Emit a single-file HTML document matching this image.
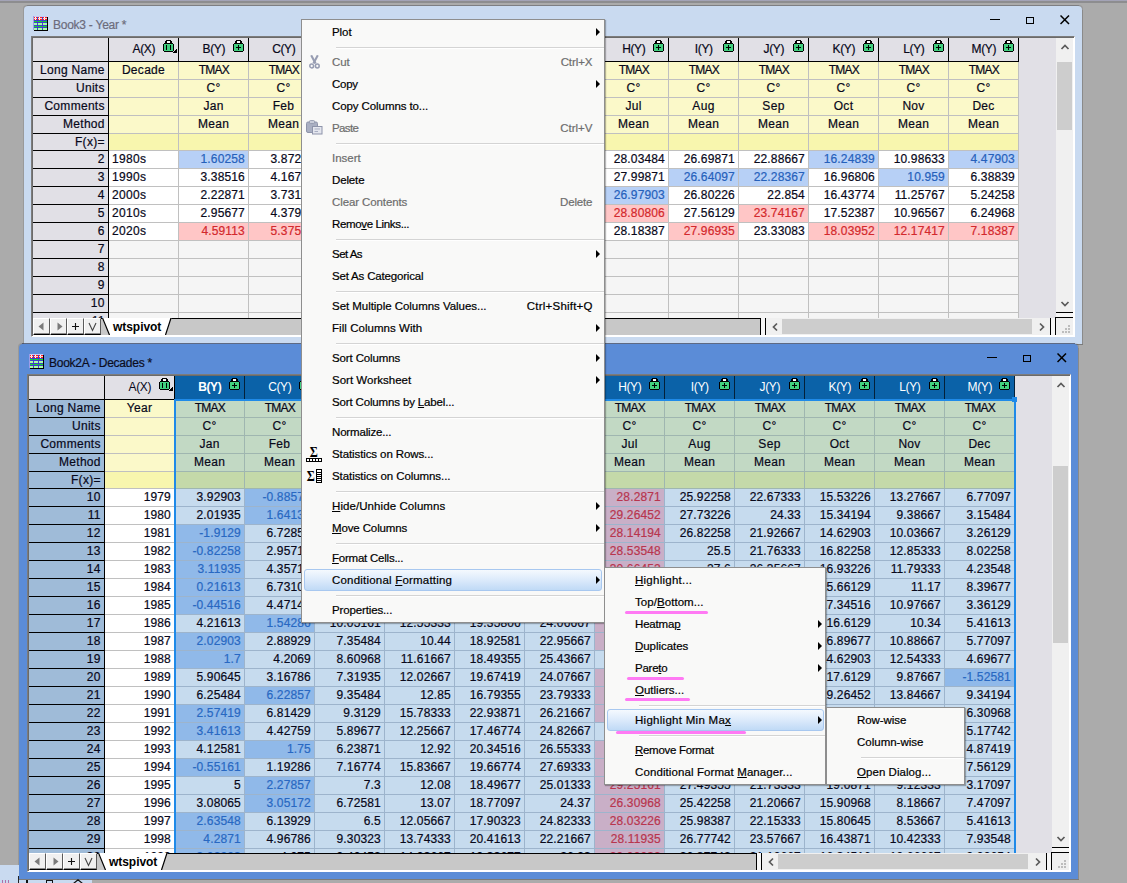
<!DOCTYPE html><html><head><meta charset="utf-8"><title>Origin</title><style>
*{box-sizing:border-box;margin:0;padding:0}
html,body{width:1127px;height:883px;overflow:hidden;background:#ababab}
body{position:relative;font-family:"Liberation Sans",sans-serif;font-size:12px;color:#000}
.a{position:absolute}
.g{position:absolute;overflow:hidden;background:#e1e0e6}
.c{position:absolute;overflow:hidden;white-space:nowrap;font-size:12px;letter-spacing:.3px;line-height:16px;height:18px;width:70px;border-right:1px solid #c0c0c0;border-bottom:1px solid #c0c0c0;color:#08081a;background:#fff;-webkit-text-stroke:.2px}
.r{text-align:right;padding-right:3.1px;letter-spacing:.14px}
.l{text-align:left;padding-left:3px}
.m{text-align:center}
.tm{letter-spacing:-.75px;padding-left:.7px}
.h{height:24px;line-height:23px;letter-spacing:-.35px;padding-left:.6px;background:#e1e0e6;border-color:#000;text-align:center}
.rh{width:76px;background:#e1e0e6;border-color:#000;text-align:right;padding-right:3.2px}
.y{background:#fbf9c9}
.y2{background:#f8f6ae}
.e{background:#f5f5f5}
.b{background:#b7d0f6;color:#2560bb}
.p{background:#ffc6c6;color:#d3282c}
.s .c{background:#c6dbee;border-color:#9db4cc}
.s .h{background:#0b62a8;color:#fff;border-color:#04213a;font-weight:normal;-webkit-text-stroke:0}
.s .bd{font-weight:bold}
.s .rh{background:#9fbbd8;border-color:#000}
.s .y{background:#c2d9c4;border-color:#9fb6b0}
.s .y2{background:#c4d9a9;border-color:#9fb6b0}
.s .b{background:#90b9e9;color:#2868c2}
.s .p{background:#c9afc7;color:#b8354e}
.s .w{background:#fff;border-color:#c0c0c0}
.s .wy{background:#fbf9c9;border-color:#c0c0c0}
.s .wy2{background:#f8f6ae;border-color:#c0c0c0}
.s .wh{background:#e1e0e6;color:#08081a;border-color:#000}
.mi{position:absolute;height:22px;line-height:21px;font-size:11.5px;white-space:nowrap;color:#000;-webkit-text-stroke:.2px}
.dis{color:#6d6d6d}
.sep{position:absolute;height:2px;border-top:1px solid #d4d4d4;border-bottom:1px solid #fff}
.arr{position:absolute;width:0;height:0;border-left:4px solid #000;border-top:4px solid transparent;border-bottom:4px solid transparent}
.menu{position:absolute;background:#f9f9f8;border:1px solid #8e8e8e;box-shadow:1px 1px 1px rgba(0,0,0,.28)}
.hl{position:absolute;border:1px solid #a8c8f0;border-radius:3px;background:linear-gradient(#f5f9fe 0%,#dceafb 50%,#c0daf6 100%)}
.pk{position:absolute;height:3.4px;border-radius:2px;background:#ff7af4}
.sb{position:absolute;background:#f0f0f0}
.th{position:absolute;background:#cdcdcd}
.tb{position:absolute;width:17px;height:17px;background:#f0f0f0;border:1px solid;border-color:#fff #5a5a5a #000 #fff;box-shadow:inset 0 -1px 0 #8a8a8a}
</style></head><body>
<div class="a" style="left:0;top:0;width:1127px;height:1px;background:#a3a3b6"></div>
<div class="a" style="left:0;top:1px;width:1127px;height:2px;background:#8d8d8f"></div>
<div class="a" style="left:24px;top:6px;width:1058px;height:338px;background:#c9daf0;border-radius:4px 4px 0 0;box-shadow:-1px -1px 0 rgba(0,0,0,.10),1px -1px 0 rgba(0,0,0,.10)"></div>
<div class="a" style="left:1082px;top:10px;width:1px;height:335px;background:#8a8a8a"></div>
<div class="a" style="left:24px;top:344px;width:1059px;height:1px;background:#7a7a7a"></div>
<div class="a" style="left:27px;top:5px;width:1052px;height:1px;background:rgba(40,50,80,.12)"></div>
<svg class="a" style="left:33px;top:16px" width="15" height="15" viewBox="0 0 15 15" shape-rendering="crispEdges"><rect x="1" y="1" width="14" height="14" fill="#000"/><rect x="0" y="0" width="14" height="14" fill="#4040cc"/><rect x="0" y="0" width="14" height="1" fill="#c8c8f4"/><rect x="0" y="0" width="1" height="14" fill="#9c9ce8"/><rect x="1" y="1" width="3" height="3" fill="#ff2020"/><rect x="2" y="1" width="1" height="3" fill="#fff"/><rect x="1" y="2" width="3" height="1" fill="#ffd0d0"/><rect x="1" y="5" width="3" height="1" fill="#10e020"/><rect x="1" y="7" width="3" height="2" fill="#a8ffa8"/><rect x="1" y="10" width="3" height="1" fill="#10e020"/><rect x="1" y="12" width="3" height="2" fill="#a8ffa8"/><rect x="5" y="1" width="4" height="3" fill="#ff2020"/><rect x="6" y="1" width="1" height="3" fill="#fff"/><rect x="5" y="2" width="4" height="1" fill="#ffd0d0"/><rect x="5" y="5" width="4" height="1" fill="#10e020"/><rect x="5" y="7" width="4" height="2" fill="#a8ffa8"/><rect x="5" y="10" width="4" height="1" fill="#10e020"/><rect x="5" y="12" width="4" height="2" fill="#a8ffa8"/><rect x="10" y="1" width="4" height="3" fill="#ff2020"/><rect x="11" y="1" width="1" height="3" fill="#fff"/><rect x="10" y="2" width="4" height="1" fill="#ffd0d0"/><rect x="10" y="5" width="4" height="1" fill="#10e020"/><rect x="10" y="7" width="4" height="2" fill="#a8ffa8"/><rect x="10" y="10" width="4" height="1" fill="#10e020"/><rect x="10" y="12" width="4" height="2" fill="#a8ffa8"/></svg>
<div class="a" style="left:53px;top:18px;font-size:12px;line-height:14px;color:#6c6c7c;white-space:nowrap;letter-spacing:-.25px;-webkit-text-stroke:.2px">Book3 - Year *</div>
<div class="a" style="left:990px;top:19px;width:10px;height:1px;background:#000"></div>
<div class="a" style="left:1026px;top:17px;width:8px;height:7px;border:1px solid #000"></div>
<svg class="a" style="left:1060px;top:15px" width="10" height="10" viewBox="0 0 10 10"><path d="M.5 .5L9 9M9 .5L.5 9" stroke="#000" stroke-width="1.5" fill="none"/></svg>
<div class="a" style="left:31px;top:36px;width:1044px;height:301px;border:2px solid;border-color:#7c7c7c #fff #fff #7c7c7c"></div>
<div class="a" style="left:32px;top:37px;width:1042px;height:299px;border-top:1px solid #6a6a6a;border-left:1px solid #6a6a6a"></div>
<div class="g" style="left:33px;top:38px;width:1023px;height:280px">
<div class="c h rh wh" style="left:0;top:0"></div>
<div class="c h" style="left:76px;top:0">A(X)</div>
<svg class="a" style="left:130px;top:2px" width="14" height="13" viewBox="0 0 14 13"><g shape-rendering="crispEdges"><rect x="3" y="0" width="5" height="1"/><rect x="2" y="1" width="7" height="3"/><rect x="4" y="1" width="3" height="2" fill="#fff"/><rect x="1" y="3" width="9" height="9"/><rect x="0" y="4" width="11" height="7"/><rect x="1" y="4" width="9" height="7" fill="#41cf7f"/><rect x="3" y="5" width="1" height="5"/><rect x="7" y="5" width="1" height="5"/><rect x="13" y="9" width="1" height="1"/><rect x="12" y="10" width="2" height="1"/><rect x="11" y="11" width="3" height="1"/><rect x="10" y="12" width="4" height="1"/></g></svg>
<div class="c h" style="left:146px;top:0">B(Y)</div>
<svg class="a" style="left:200px;top:2px" width="11" height="13" viewBox="0 0 11 13"><g shape-rendering="crispEdges"><rect x="3" y="0" width="5" height="1"/><rect x="2" y="1" width="7" height="3"/><rect x="4" y="1" width="3" height="2" fill="#fff"/><rect x="1" y="3" width="9" height="9"/><rect x="0" y="4" width="11" height="7"/><rect x="1" y="4" width="9" height="7" fill="#41cf7f"/><rect x="5" y="5" width="1" height="5"/><rect x="3" y="7" width="5" height="1"/></g></svg>
<div class="c h" style="left:216px;top:0">C(Y)</div>
<svg class="a" style="left:270px;top:2px" width="11" height="13" viewBox="0 0 11 13"><g shape-rendering="crispEdges"><rect x="3" y="0" width="5" height="1"/><rect x="2" y="1" width="7" height="3"/><rect x="4" y="1" width="3" height="2" fill="#fff"/><rect x="1" y="3" width="9" height="9"/><rect x="0" y="4" width="11" height="7"/><rect x="1" y="4" width="9" height="7" fill="#41cf7f"/><rect x="5" y="5" width="1" height="5"/><rect x="3" y="7" width="5" height="1"/></g></svg>
<div class="c h" style="left:286px;top:0">D(Y)</div>
<svg class="a" style="left:340px;top:2px" width="11" height="13" viewBox="0 0 11 13"><g shape-rendering="crispEdges"><rect x="3" y="0" width="5" height="1"/><rect x="2" y="1" width="7" height="3"/><rect x="4" y="1" width="3" height="2" fill="#fff"/><rect x="1" y="3" width="9" height="9"/><rect x="0" y="4" width="11" height="7"/><rect x="1" y="4" width="9" height="7" fill="#41cf7f"/><rect x="5" y="5" width="1" height="5"/><rect x="3" y="7" width="5" height="1"/></g></svg>
<div class="c h" style="left:356px;top:0">E(Y)</div>
<svg class="a" style="left:410px;top:2px" width="11" height="13" viewBox="0 0 11 13"><g shape-rendering="crispEdges"><rect x="3" y="0" width="5" height="1"/><rect x="2" y="1" width="7" height="3"/><rect x="4" y="1" width="3" height="2" fill="#fff"/><rect x="1" y="3" width="9" height="9"/><rect x="0" y="4" width="11" height="7"/><rect x="1" y="4" width="9" height="7" fill="#41cf7f"/><rect x="5" y="5" width="1" height="5"/><rect x="3" y="7" width="5" height="1"/></g></svg>
<div class="c h" style="left:426px;top:0">F(Y)</div>
<svg class="a" style="left:480px;top:2px" width="11" height="13" viewBox="0 0 11 13"><g shape-rendering="crispEdges"><rect x="3" y="0" width="5" height="1"/><rect x="2" y="1" width="7" height="3"/><rect x="4" y="1" width="3" height="2" fill="#fff"/><rect x="1" y="3" width="9" height="9"/><rect x="0" y="4" width="11" height="7"/><rect x="1" y="4" width="9" height="7" fill="#41cf7f"/><rect x="5" y="5" width="1" height="5"/><rect x="3" y="7" width="5" height="1"/></g></svg>
<div class="c h" style="left:496px;top:0">G(Y)</div>
<svg class="a" style="left:550px;top:2px" width="11" height="13" viewBox="0 0 11 13"><g shape-rendering="crispEdges"><rect x="3" y="0" width="5" height="1"/><rect x="2" y="1" width="7" height="3"/><rect x="4" y="1" width="3" height="2" fill="#fff"/><rect x="1" y="3" width="9" height="9"/><rect x="0" y="4" width="11" height="7"/><rect x="1" y="4" width="9" height="7" fill="#41cf7f"/><rect x="5" y="5" width="1" height="5"/><rect x="3" y="7" width="5" height="1"/></g></svg>
<div class="c h" style="left:566px;top:0">H(Y)</div>
<svg class="a" style="left:620px;top:2px" width="11" height="13" viewBox="0 0 11 13"><g shape-rendering="crispEdges"><rect x="3" y="0" width="5" height="1"/><rect x="2" y="1" width="7" height="3"/><rect x="4" y="1" width="3" height="2" fill="#fff"/><rect x="1" y="3" width="9" height="9"/><rect x="0" y="4" width="11" height="7"/><rect x="1" y="4" width="9" height="7" fill="#41cf7f"/><rect x="5" y="5" width="1" height="5"/><rect x="3" y="7" width="5" height="1"/></g></svg>
<div class="c h" style="left:636px;top:0">I(Y)</div>
<svg class="a" style="left:690px;top:2px" width="11" height="13" viewBox="0 0 11 13"><g shape-rendering="crispEdges"><rect x="3" y="0" width="5" height="1"/><rect x="2" y="1" width="7" height="3"/><rect x="4" y="1" width="3" height="2" fill="#fff"/><rect x="1" y="3" width="9" height="9"/><rect x="0" y="4" width="11" height="7"/><rect x="1" y="4" width="9" height="7" fill="#41cf7f"/><rect x="5" y="5" width="1" height="5"/><rect x="3" y="7" width="5" height="1"/></g></svg>
<div class="c h" style="left:706px;top:0">J(Y)</div>
<svg class="a" style="left:760px;top:2px" width="11" height="13" viewBox="0 0 11 13"><g shape-rendering="crispEdges"><rect x="3" y="0" width="5" height="1"/><rect x="2" y="1" width="7" height="3"/><rect x="4" y="1" width="3" height="2" fill="#fff"/><rect x="1" y="3" width="9" height="9"/><rect x="0" y="4" width="11" height="7"/><rect x="1" y="4" width="9" height="7" fill="#41cf7f"/><rect x="5" y="5" width="1" height="5"/><rect x="3" y="7" width="5" height="1"/></g></svg>
<div class="c h" style="left:776px;top:0">K(Y)</div>
<svg class="a" style="left:830px;top:2px" width="11" height="13" viewBox="0 0 11 13"><g shape-rendering="crispEdges"><rect x="3" y="0" width="5" height="1"/><rect x="2" y="1" width="7" height="3"/><rect x="4" y="1" width="3" height="2" fill="#fff"/><rect x="1" y="3" width="9" height="9"/><rect x="0" y="4" width="11" height="7"/><rect x="1" y="4" width="9" height="7" fill="#41cf7f"/><rect x="5" y="5" width="1" height="5"/><rect x="3" y="7" width="5" height="1"/></g></svg>
<div class="c h" style="left:846px;top:0">L(Y)</div>
<svg class="a" style="left:900px;top:2px" width="11" height="13" viewBox="0 0 11 13"><g shape-rendering="crispEdges"><rect x="3" y="0" width="5" height="1"/><rect x="2" y="1" width="7" height="3"/><rect x="4" y="1" width="3" height="2" fill="#fff"/><rect x="1" y="3" width="9" height="9"/><rect x="0" y="4" width="11" height="7"/><rect x="1" y="4" width="9" height="7" fill="#41cf7f"/><rect x="5" y="5" width="1" height="5"/><rect x="3" y="7" width="5" height="1"/></g></svg>
<div class="c h" style="left:916px;top:0">M(Y)</div>
<svg class="a" style="left:970px;top:2px" width="11" height="13" viewBox="0 0 11 13"><g shape-rendering="crispEdges"><rect x="3" y="0" width="5" height="1"/><rect x="2" y="1" width="7" height="3"/><rect x="4" y="1" width="3" height="2" fill="#fff"/><rect x="1" y="3" width="9" height="9"/><rect x="0" y="4" width="11" height="7"/><rect x="1" y="4" width="9" height="7" fill="#41cf7f"/><rect x="5" y="5" width="1" height="5"/><rect x="3" y="7" width="5" height="1"/></g></svg>
<div class="c rh" style="left:0;top:24px">Long Name</div>
<div class="c m y" style="left:76px;top:24px">Decade</div>
<div class="c m y tm" style="left:146px;top:24px">TMAX</div>
<div class="c m y tm" style="left:216px;top:24px">TMAX</div>
<div class="c m y tm" style="left:286px;top:24px">TMAX</div>
<div class="c m y tm" style="left:356px;top:24px">TMAX</div>
<div class="c m y tm" style="left:426px;top:24px">TMAX</div>
<div class="c m y tm" style="left:496px;top:24px">TMAX</div>
<div class="c m y tm" style="left:566px;top:24px">TMAX</div>
<div class="c m y tm" style="left:636px;top:24px">TMAX</div>
<div class="c m y tm" style="left:706px;top:24px">TMAX</div>
<div class="c m y tm" style="left:776px;top:24px">TMAX</div>
<div class="c m y tm" style="left:846px;top:24px">TMAX</div>
<div class="c m y tm" style="left:916px;top:24px">TMAX</div>
<div class="c rh" style="left:0;top:42px">Units</div>
<div class="c m y" style="left:76px;top:42px"></div>
<div class="c m y" style="left:146px;top:42px">C°</div>
<div class="c m y" style="left:216px;top:42px">C°</div>
<div class="c m y" style="left:286px;top:42px">C°</div>
<div class="c m y" style="left:356px;top:42px">C°</div>
<div class="c m y" style="left:426px;top:42px">C°</div>
<div class="c m y" style="left:496px;top:42px">C°</div>
<div class="c m y" style="left:566px;top:42px">C°</div>
<div class="c m y" style="left:636px;top:42px">C°</div>
<div class="c m y" style="left:706px;top:42px">C°</div>
<div class="c m y" style="left:776px;top:42px">C°</div>
<div class="c m y" style="left:846px;top:42px">C°</div>
<div class="c m y" style="left:916px;top:42px">C°</div>
<div class="c rh" style="left:0;top:60px">Comments</div>
<div class="c m y" style="left:76px;top:60px"></div>
<div class="c m y" style="left:146px;top:60px">Jan</div>
<div class="c m y" style="left:216px;top:60px">Feb</div>
<div class="c m y" style="left:286px;top:60px">Mar</div>
<div class="c m y" style="left:356px;top:60px">Apr</div>
<div class="c m y" style="left:426px;top:60px">May</div>
<div class="c m y" style="left:496px;top:60px">Jun</div>
<div class="c m y" style="left:566px;top:60px">Jul</div>
<div class="c m y" style="left:636px;top:60px">Aug</div>
<div class="c m y" style="left:706px;top:60px">Sep</div>
<div class="c m y" style="left:776px;top:60px">Oct</div>
<div class="c m y" style="left:846px;top:60px">Nov</div>
<div class="c m y" style="left:916px;top:60px">Dec</div>
<div class="c rh" style="left:0;top:78px">Method</div>
<div class="c m y" style="left:76px;top:78px"></div>
<div class="c m y" style="left:146px;top:78px">Mean</div>
<div class="c m y" style="left:216px;top:78px">Mean</div>
<div class="c m y" style="left:286px;top:78px">Mean</div>
<div class="c m y" style="left:356px;top:78px">Mean</div>
<div class="c m y" style="left:426px;top:78px">Mean</div>
<div class="c m y" style="left:496px;top:78px">Mean</div>
<div class="c m y" style="left:566px;top:78px">Mean</div>
<div class="c m y" style="left:636px;top:78px">Mean</div>
<div class="c m y" style="left:706px;top:78px">Mean</div>
<div class="c m y" style="left:776px;top:78px">Mean</div>
<div class="c m y" style="left:846px;top:78px">Mean</div>
<div class="c m y" style="left:916px;top:78px">Mean</div>
<div class="c rh" style="left:0;top:96px;height:17px">F(x)=</div>
<div class="c m y2" style="left:76px;top:96px;height:17px"></div>
<div class="c m y2" style="left:146px;top:96px;height:17px"></div>
<div class="c m y2" style="left:216px;top:96px;height:17px"></div>
<div class="c m y2" style="left:286px;top:96px;height:17px"></div>
<div class="c m y2" style="left:356px;top:96px;height:17px"></div>
<div class="c m y2" style="left:426px;top:96px;height:17px"></div>
<div class="c m y2" style="left:496px;top:96px;height:17px"></div>
<div class="c m y2" style="left:566px;top:96px;height:17px"></div>
<div class="c m y2" style="left:636px;top:96px;height:17px"></div>
<div class="c m y2" style="left:706px;top:96px;height:17px"></div>
<div class="c m y2" style="left:776px;top:96px;height:17px"></div>
<div class="c m y2" style="left:846px;top:96px;height:17px"></div>
<div class="c m y2" style="left:916px;top:96px;height:17px"></div>
<div class="c rh" style="left:0;top:113px">2</div>
<div class="c l" style="left:76px;top:113px">1980s</div>
<div class="c r b" style="left:146px;top:113px">1.60258</div>
<div class="c r" style="left:216px;top:113px">3.87241</div>
<div class="c r" style="left:286px;top:113px">9.14516</div>
<div class="c r" style="left:356px;top:113px">14.2</div>
<div class="c r" style="left:426px;top:113px">19.8</div>
<div class="c r" style="left:496px;top:113px">24.9</div>
<div class="c r" style="left:566px;top:113px">28.03484</div>
<div class="c r" style="left:636px;top:113px">26.69871</div>
<div class="c r" style="left:706px;top:113px">22.88667</div>
<div class="c r b" style="left:776px;top:113px">16.24839</div>
<div class="c r" style="left:846px;top:113px">10.98633</div>
<div class="c r b" style="left:916px;top:113px">4.47903</div>
<div class="c rh" style="left:0;top:131px">3</div>
<div class="c l" style="left:76px;top:131px">1990s</div>
<div class="c r" style="left:146px;top:131px">3.38516</div>
<div class="c r" style="left:216px;top:131px">4.16786</div>
<div class="c r" style="left:286px;top:131px">9.1</div>
<div class="c r" style="left:356px;top:131px">14.2</div>
<div class="c r" style="left:426px;top:131px">19.8</div>
<div class="c r" style="left:496px;top:131px">24.9</div>
<div class="c r" style="left:566px;top:131px">27.99871</div>
<div class="c r b" style="left:636px;top:131px">26.64097</div>
<div class="c r b" style="left:706px;top:131px">22.28367</div>
<div class="c r" style="left:776px;top:131px">16.96806</div>
<div class="c r b" style="left:846px;top:131px">10.959</div>
<div class="c r" style="left:916px;top:131px">6.38839</div>
<div class="c rh" style="left:0;top:149px">4</div>
<div class="c l" style="left:76px;top:149px">2000s</div>
<div class="c r" style="left:146px;top:149px">2.22871</div>
<div class="c r" style="left:216px;top:149px">3.73103</div>
<div class="c r" style="left:286px;top:149px">9.1</div>
<div class="c r" style="left:356px;top:149px">14.2</div>
<div class="c r" style="left:426px;top:149px">19.8</div>
<div class="c r" style="left:496px;top:149px">24.9</div>
<div class="c r b" style="left:566px;top:149px">26.97903</div>
<div class="c r" style="left:636px;top:149px">26.80226</div>
<div class="c r" style="left:706px;top:149px">22.854</div>
<div class="c r" style="left:776px;top:149px">16.43774</div>
<div class="c r" style="left:846px;top:149px">11.25767</div>
<div class="c r" style="left:916px;top:149px">5.24258</div>
<div class="c rh" style="left:0;top:167px">5</div>
<div class="c l" style="left:76px;top:167px">2010s</div>
<div class="c r" style="left:146px;top:167px">2.95677</div>
<div class="c r" style="left:216px;top:167px">4.37931</div>
<div class="c r" style="left:286px;top:167px">9.1</div>
<div class="c r" style="left:356px;top:167px">14.2</div>
<div class="c r" style="left:426px;top:167px">19.8</div>
<div class="c r" style="left:496px;top:167px">24.9</div>
<div class="c r p" style="left:566px;top:167px">28.80806</div>
<div class="c r" style="left:636px;top:167px">27.56129</div>
<div class="c r p" style="left:706px;top:167px">23.74167</div>
<div class="c r" style="left:776px;top:167px">17.52387</div>
<div class="c r" style="left:846px;top:167px">10.96567</div>
<div class="c r" style="left:916px;top:167px">6.24968</div>
<div class="c rh" style="left:0;top:185px">6</div>
<div class="c l" style="left:76px;top:185px">2020s</div>
<div class="c r p" style="left:146px;top:185px">4.59113</div>
<div class="c r p" style="left:216px;top:185px">5.37586</div>
<div class="c r" style="left:286px;top:185px">9.1</div>
<div class="c r" style="left:356px;top:185px">14.2</div>
<div class="c r" style="left:426px;top:185px">19.8</div>
<div class="c r" style="left:496px;top:185px">24.9</div>
<div class="c r" style="left:566px;top:185px">28.18387</div>
<div class="c r p" style="left:636px;top:185px">27.96935</div>
<div class="c r" style="left:706px;top:185px">23.33083</div>
<div class="c r p" style="left:776px;top:185px">18.03952</div>
<div class="c r p" style="left:846px;top:185px">12.17417</div>
<div class="c r p" style="left:916px;top:185px">7.18387</div>
<div class="c rh" style="left:0;top:203px">7</div>
<div class="c e" style="left:76px;top:203px"></div>
<div class="c e" style="left:146px;top:203px"></div>
<div class="c e" style="left:216px;top:203px"></div>
<div class="c e" style="left:286px;top:203px"></div>
<div class="c e" style="left:356px;top:203px"></div>
<div class="c e" style="left:426px;top:203px"></div>
<div class="c e" style="left:496px;top:203px"></div>
<div class="c e" style="left:566px;top:203px"></div>
<div class="c e" style="left:636px;top:203px"></div>
<div class="c e" style="left:706px;top:203px"></div>
<div class="c e" style="left:776px;top:203px"></div>
<div class="c e" style="left:846px;top:203px"></div>
<div class="c e" style="left:916px;top:203px"></div>
<div class="c rh" style="left:0;top:221px">8</div>
<div class="c e" style="left:76px;top:221px"></div>
<div class="c e" style="left:146px;top:221px"></div>
<div class="c e" style="left:216px;top:221px"></div>
<div class="c e" style="left:286px;top:221px"></div>
<div class="c e" style="left:356px;top:221px"></div>
<div class="c e" style="left:426px;top:221px"></div>
<div class="c e" style="left:496px;top:221px"></div>
<div class="c e" style="left:566px;top:221px"></div>
<div class="c e" style="left:636px;top:221px"></div>
<div class="c e" style="left:706px;top:221px"></div>
<div class="c e" style="left:776px;top:221px"></div>
<div class="c e" style="left:846px;top:221px"></div>
<div class="c e" style="left:916px;top:221px"></div>
<div class="c rh" style="left:0;top:239px">9</div>
<div class="c e" style="left:76px;top:239px"></div>
<div class="c e" style="left:146px;top:239px"></div>
<div class="c e" style="left:216px;top:239px"></div>
<div class="c e" style="left:286px;top:239px"></div>
<div class="c e" style="left:356px;top:239px"></div>
<div class="c e" style="left:426px;top:239px"></div>
<div class="c e" style="left:496px;top:239px"></div>
<div class="c e" style="left:566px;top:239px"></div>
<div class="c e" style="left:636px;top:239px"></div>
<div class="c e" style="left:706px;top:239px"></div>
<div class="c e" style="left:776px;top:239px"></div>
<div class="c e" style="left:846px;top:239px"></div>
<div class="c e" style="left:916px;top:239px"></div>
<div class="c rh" style="left:0;top:257px">10</div>
<div class="c e" style="left:76px;top:257px"></div>
<div class="c e" style="left:146px;top:257px"></div>
<div class="c e" style="left:216px;top:257px"></div>
<div class="c e" style="left:286px;top:257px"></div>
<div class="c e" style="left:356px;top:257px"></div>
<div class="c e" style="left:426px;top:257px"></div>
<div class="c e" style="left:496px;top:257px"></div>
<div class="c e" style="left:566px;top:257px"></div>
<div class="c e" style="left:636px;top:257px"></div>
<div class="c e" style="left:706px;top:257px"></div>
<div class="c e" style="left:776px;top:257px"></div>
<div class="c e" style="left:846px;top:257px"></div>
<div class="c e" style="left:916px;top:257px"></div>
<div class="c rh" style="left:0;top:275px">11</div>
<div class="c e" style="left:76px;top:275px"></div>
<div class="c e" style="left:146px;top:275px"></div>
<div class="c e" style="left:216px;top:275px"></div>
<div class="c e" style="left:286px;top:275px"></div>
<div class="c e" style="left:356px;top:275px"></div>
<div class="c e" style="left:426px;top:275px"></div>
<div class="c e" style="left:496px;top:275px"></div>
<div class="c e" style="left:566px;top:275px"></div>
<div class="c e" style="left:636px;top:275px"></div>
<div class="c e" style="left:706px;top:275px"></div>
<div class="c e" style="left:776px;top:275px"></div>
<div class="c e" style="left:846px;top:275px"></div>
<div class="c e" style="left:916px;top:275px"></div>
</div>
<div class="a" style="left:19px;top:344px;width:1059px;height:535px;background:#5b8cd7;border-radius:4px 4px 0 0;box-shadow:-1px -1px 0 rgba(0,0,0,.10),1px -1px 0 rgba(0,0,0,.10)"></div>
<div class="a" style="left:1078px;top:348px;width:1px;height:532px;background:#8a8a8a"></div>
<div class="a" style="left:19px;top:879px;width:1060px;height:1px;background:#7a7a7a"></div>
<div class="a" style="left:22px;top:343px;width:1053px;height:1px;background:rgba(40,50,80,.55)"></div>
<svg class="a" style="left:29px;top:354px" width="15" height="15" viewBox="0 0 15 15" shape-rendering="crispEdges"><rect x="1" y="1" width="14" height="14" fill="#000"/><rect x="0" y="0" width="14" height="14" fill="#4040cc"/><rect x="0" y="0" width="14" height="1" fill="#c8c8f4"/><rect x="0" y="0" width="1" height="14" fill="#9c9ce8"/><rect x="1" y="1" width="3" height="3" fill="#ff2020"/><rect x="2" y="1" width="1" height="3" fill="#fff"/><rect x="1" y="2" width="3" height="1" fill="#ffd0d0"/><rect x="1" y="5" width="3" height="1" fill="#10e020"/><rect x="1" y="7" width="3" height="2" fill="#a8ffa8"/><rect x="1" y="10" width="3" height="1" fill="#10e020"/><rect x="1" y="12" width="3" height="2" fill="#a8ffa8"/><rect x="5" y="1" width="4" height="3" fill="#ff2020"/><rect x="6" y="1" width="1" height="3" fill="#fff"/><rect x="5" y="2" width="4" height="1" fill="#ffd0d0"/><rect x="5" y="5" width="4" height="1" fill="#10e020"/><rect x="5" y="7" width="4" height="2" fill="#a8ffa8"/><rect x="5" y="10" width="4" height="1" fill="#10e020"/><rect x="5" y="12" width="4" height="2" fill="#a8ffa8"/><rect x="10" y="1" width="4" height="3" fill="#ff2020"/><rect x="11" y="1" width="1" height="3" fill="#fff"/><rect x="10" y="2" width="4" height="1" fill="#ffd0d0"/><rect x="10" y="5" width="4" height="1" fill="#10e020"/><rect x="10" y="7" width="4" height="2" fill="#a8ffa8"/><rect x="10" y="10" width="4" height="1" fill="#10e020"/><rect x="10" y="12" width="4" height="2" fill="#a8ffa8"/></svg>
<div class="a" style="left:49px;top:356px;font-size:12px;line-height:14px;color:#0c0c20;white-space:nowrap;letter-spacing:-.25px;-webkit-text-stroke:.2px">Book2A - Decades *</div>
<div class="a" style="left:987px;top:357px;width:10px;height:1px;background:#000"></div>
<div class="a" style="left:1023px;top:355px;width:8px;height:7px;border:1px solid #000"></div>
<svg class="a" style="left:1057px;top:353px" width="10" height="10" viewBox="0 0 10 10"><path d="M.5 .5L9 9M9 .5L.5 9" stroke="#000" stroke-width="1.5" fill="none"/></svg>
<div class="a" style="left:27px;top:374px;width:1044px;height:498px;border:2px solid;border-color:#7c7c7c #fff #fff #7c7c7c"></div>
<div class="a" style="left:28px;top:375px;width:1042px;height:496px;border-top:1px solid #6a6a6a;border-left:1px solid #6a6a6a"></div>
<div class="g s" style="left:29px;top:376px;width:1023px;height:477px">
<div class="c h rh wh" style="left:0;top:0"></div>
<div class="c h wh" style="left:76px;top:0">A(X)</div>
<svg class="a" style="left:130px;top:2px" width="14" height="13" viewBox="0 0 14 13"><g shape-rendering="crispEdges"><rect x="3" y="0" width="5" height="1"/><rect x="2" y="1" width="7" height="3"/><rect x="4" y="1" width="3" height="2" fill="#fff"/><rect x="1" y="3" width="9" height="9"/><rect x="0" y="4" width="11" height="7"/><rect x="1" y="4" width="9" height="7" fill="#41cf7f"/><rect x="3" y="5" width="1" height="5"/><rect x="7" y="5" width="1" height="5"/><rect x="13" y="9" width="1" height="1"/><rect x="12" y="10" width="2" height="1"/><rect x="11" y="11" width="3" height="1"/><rect x="10" y="12" width="4" height="1"/></g></svg>
<div class="c h bd" style="left:146px;top:0">B(Y)</div>
<svg class="a" style="left:200px;top:2px" width="11" height="13" viewBox="0 0 11 13"><g shape-rendering="crispEdges"><rect x="3" y="0" width="5" height="1"/><rect x="2" y="1" width="7" height="3"/><rect x="4" y="1" width="3" height="2" fill="#fff"/><rect x="1" y="3" width="9" height="9"/><rect x="0" y="4" width="11" height="7"/><rect x="1" y="4" width="9" height="7" fill="#41cf7f"/><rect x="5" y="5" width="1" height="5"/><rect x="3" y="7" width="5" height="1"/></g></svg>
<div class="c h" style="left:216px;top:0">C(Y)</div>
<svg class="a" style="left:270px;top:2px" width="11" height="13" viewBox="0 0 11 13"><g shape-rendering="crispEdges"><rect x="3" y="0" width="5" height="1"/><rect x="2" y="1" width="7" height="3"/><rect x="4" y="1" width="3" height="2" fill="#fff"/><rect x="1" y="3" width="9" height="9"/><rect x="0" y="4" width="11" height="7"/><rect x="1" y="4" width="9" height="7" fill="#41cf7f"/><rect x="5" y="5" width="1" height="5"/><rect x="3" y="7" width="5" height="1"/></g></svg>
<div class="c h" style="left:286px;top:0">D(Y)</div>
<svg class="a" style="left:340px;top:2px" width="11" height="13" viewBox="0 0 11 13"><g shape-rendering="crispEdges"><rect x="3" y="0" width="5" height="1"/><rect x="2" y="1" width="7" height="3"/><rect x="4" y="1" width="3" height="2" fill="#fff"/><rect x="1" y="3" width="9" height="9"/><rect x="0" y="4" width="11" height="7"/><rect x="1" y="4" width="9" height="7" fill="#41cf7f"/><rect x="5" y="5" width="1" height="5"/><rect x="3" y="7" width="5" height="1"/></g></svg>
<div class="c h" style="left:356px;top:0">E(Y)</div>
<svg class="a" style="left:410px;top:2px" width="11" height="13" viewBox="0 0 11 13"><g shape-rendering="crispEdges"><rect x="3" y="0" width="5" height="1"/><rect x="2" y="1" width="7" height="3"/><rect x="4" y="1" width="3" height="2" fill="#fff"/><rect x="1" y="3" width="9" height="9"/><rect x="0" y="4" width="11" height="7"/><rect x="1" y="4" width="9" height="7" fill="#41cf7f"/><rect x="5" y="5" width="1" height="5"/><rect x="3" y="7" width="5" height="1"/></g></svg>
<div class="c h" style="left:426px;top:0">F(Y)</div>
<svg class="a" style="left:480px;top:2px" width="11" height="13" viewBox="0 0 11 13"><g shape-rendering="crispEdges"><rect x="3" y="0" width="5" height="1"/><rect x="2" y="1" width="7" height="3"/><rect x="4" y="1" width="3" height="2" fill="#fff"/><rect x="1" y="3" width="9" height="9"/><rect x="0" y="4" width="11" height="7"/><rect x="1" y="4" width="9" height="7" fill="#41cf7f"/><rect x="5" y="5" width="1" height="5"/><rect x="3" y="7" width="5" height="1"/></g></svg>
<div class="c h" style="left:496px;top:0">G(Y)</div>
<svg class="a" style="left:550px;top:2px" width="11" height="13" viewBox="0 0 11 13"><g shape-rendering="crispEdges"><rect x="3" y="0" width="5" height="1"/><rect x="2" y="1" width="7" height="3"/><rect x="4" y="1" width="3" height="2" fill="#fff"/><rect x="1" y="3" width="9" height="9"/><rect x="0" y="4" width="11" height="7"/><rect x="1" y="4" width="9" height="7" fill="#41cf7f"/><rect x="5" y="5" width="1" height="5"/><rect x="3" y="7" width="5" height="1"/></g></svg>
<div class="c h" style="left:566px;top:0">H(Y)</div>
<svg class="a" style="left:620px;top:2px" width="11" height="13" viewBox="0 0 11 13"><g shape-rendering="crispEdges"><rect x="3" y="0" width="5" height="1"/><rect x="2" y="1" width="7" height="3"/><rect x="4" y="1" width="3" height="2" fill="#fff"/><rect x="1" y="3" width="9" height="9"/><rect x="0" y="4" width="11" height="7"/><rect x="1" y="4" width="9" height="7" fill="#41cf7f"/><rect x="5" y="5" width="1" height="5"/><rect x="3" y="7" width="5" height="1"/></g></svg>
<div class="c h" style="left:636px;top:0">I(Y)</div>
<svg class="a" style="left:690px;top:2px" width="11" height="13" viewBox="0 0 11 13"><g shape-rendering="crispEdges"><rect x="3" y="0" width="5" height="1"/><rect x="2" y="1" width="7" height="3"/><rect x="4" y="1" width="3" height="2" fill="#fff"/><rect x="1" y="3" width="9" height="9"/><rect x="0" y="4" width="11" height="7"/><rect x="1" y="4" width="9" height="7" fill="#41cf7f"/><rect x="5" y="5" width="1" height="5"/><rect x="3" y="7" width="5" height="1"/></g></svg>
<div class="c h" style="left:706px;top:0">J(Y)</div>
<svg class="a" style="left:760px;top:2px" width="11" height="13" viewBox="0 0 11 13"><g shape-rendering="crispEdges"><rect x="3" y="0" width="5" height="1"/><rect x="2" y="1" width="7" height="3"/><rect x="4" y="1" width="3" height="2" fill="#fff"/><rect x="1" y="3" width="9" height="9"/><rect x="0" y="4" width="11" height="7"/><rect x="1" y="4" width="9" height="7" fill="#41cf7f"/><rect x="5" y="5" width="1" height="5"/><rect x="3" y="7" width="5" height="1"/></g></svg>
<div class="c h" style="left:776px;top:0">K(Y)</div>
<svg class="a" style="left:830px;top:2px" width="11" height="13" viewBox="0 0 11 13"><g shape-rendering="crispEdges"><rect x="3" y="0" width="5" height="1"/><rect x="2" y="1" width="7" height="3"/><rect x="4" y="1" width="3" height="2" fill="#fff"/><rect x="1" y="3" width="9" height="9"/><rect x="0" y="4" width="11" height="7"/><rect x="1" y="4" width="9" height="7" fill="#41cf7f"/><rect x="5" y="5" width="1" height="5"/><rect x="3" y="7" width="5" height="1"/></g></svg>
<div class="c h" style="left:846px;top:0">L(Y)</div>
<svg class="a" style="left:900px;top:2px" width="11" height="13" viewBox="0 0 11 13"><g shape-rendering="crispEdges"><rect x="3" y="0" width="5" height="1"/><rect x="2" y="1" width="7" height="3"/><rect x="4" y="1" width="3" height="2" fill="#fff"/><rect x="1" y="3" width="9" height="9"/><rect x="0" y="4" width="11" height="7"/><rect x="1" y="4" width="9" height="7" fill="#41cf7f"/><rect x="5" y="5" width="1" height="5"/><rect x="3" y="7" width="5" height="1"/></g></svg>
<div class="c h" style="left:916px;top:0">M(Y)</div>
<svg class="a" style="left:970px;top:2px" width="11" height="13" viewBox="0 0 11 13"><g shape-rendering="crispEdges"><rect x="3" y="0" width="5" height="1"/><rect x="2" y="1" width="7" height="3"/><rect x="4" y="1" width="3" height="2" fill="#fff"/><rect x="1" y="3" width="9" height="9"/><rect x="0" y="4" width="11" height="7"/><rect x="1" y="4" width="9" height="7" fill="#41cf7f"/><rect x="5" y="5" width="1" height="5"/><rect x="3" y="7" width="5" height="1"/></g></svg>
<div class="c rh" style="left:0;top:24px">Long Name</div>
<div class="c m wy" style="left:76px;top:24px">Year</div>
<div class="c m y tm" style="left:146px;top:24px">TMAX</div>
<div class="c m y tm" style="left:216px;top:24px">TMAX</div>
<div class="c m y tm" style="left:286px;top:24px">TMAX</div>
<div class="c m y tm" style="left:356px;top:24px">TMAX</div>
<div class="c m y tm" style="left:426px;top:24px">TMAX</div>
<div class="c m y tm" style="left:496px;top:24px">TMAX</div>
<div class="c m y tm" style="left:566px;top:24px">TMAX</div>
<div class="c m y tm" style="left:636px;top:24px">TMAX</div>
<div class="c m y tm" style="left:706px;top:24px">TMAX</div>
<div class="c m y tm" style="left:776px;top:24px">TMAX</div>
<div class="c m y tm" style="left:846px;top:24px">TMAX</div>
<div class="c m y tm" style="left:916px;top:24px">TMAX</div>
<div class="c rh" style="left:0;top:42px">Units</div>
<div class="c m wy" style="left:76px;top:42px"></div>
<div class="c m y" style="left:146px;top:42px">C°</div>
<div class="c m y" style="left:216px;top:42px">C°</div>
<div class="c m y" style="left:286px;top:42px">C°</div>
<div class="c m y" style="left:356px;top:42px">C°</div>
<div class="c m y" style="left:426px;top:42px">C°</div>
<div class="c m y" style="left:496px;top:42px">C°</div>
<div class="c m y" style="left:566px;top:42px">C°</div>
<div class="c m y" style="left:636px;top:42px">C°</div>
<div class="c m y" style="left:706px;top:42px">C°</div>
<div class="c m y" style="left:776px;top:42px">C°</div>
<div class="c m y" style="left:846px;top:42px">C°</div>
<div class="c m y" style="left:916px;top:42px">C°</div>
<div class="c rh" style="left:0;top:60px">Comments</div>
<div class="c m wy" style="left:76px;top:60px"></div>
<div class="c m y" style="left:146px;top:60px">Jan</div>
<div class="c m y" style="left:216px;top:60px">Feb</div>
<div class="c m y" style="left:286px;top:60px">Mar</div>
<div class="c m y" style="left:356px;top:60px">Apr</div>
<div class="c m y" style="left:426px;top:60px">May</div>
<div class="c m y" style="left:496px;top:60px">Jun</div>
<div class="c m y" style="left:566px;top:60px">Jul</div>
<div class="c m y" style="left:636px;top:60px">Aug</div>
<div class="c m y" style="left:706px;top:60px">Sep</div>
<div class="c m y" style="left:776px;top:60px">Oct</div>
<div class="c m y" style="left:846px;top:60px">Nov</div>
<div class="c m y" style="left:916px;top:60px">Dec</div>
<div class="c rh" style="left:0;top:78px">Method</div>
<div class="c m wy" style="left:76px;top:78px"></div>
<div class="c m y" style="left:146px;top:78px">Mean</div>
<div class="c m y" style="left:216px;top:78px">Mean</div>
<div class="c m y" style="left:286px;top:78px">Mean</div>
<div class="c m y" style="left:356px;top:78px">Mean</div>
<div class="c m y" style="left:426px;top:78px">Mean</div>
<div class="c m y" style="left:496px;top:78px">Mean</div>
<div class="c m y" style="left:566px;top:78px">Mean</div>
<div class="c m y" style="left:636px;top:78px">Mean</div>
<div class="c m y" style="left:706px;top:78px">Mean</div>
<div class="c m y" style="left:776px;top:78px">Mean</div>
<div class="c m y" style="left:846px;top:78px">Mean</div>
<div class="c m y" style="left:916px;top:78px">Mean</div>
<div class="c rh" style="left:0;top:96px;height:17px">F(x)=</div>
<div class="c m wy2" style="left:76px;top:96px;height:17px"></div>
<div class="c m y2" style="left:146px;top:96px;height:17px"></div>
<div class="c m y2" style="left:216px;top:96px;height:17px"></div>
<div class="c m y2" style="left:286px;top:96px;height:17px"></div>
<div class="c m y2" style="left:356px;top:96px;height:17px"></div>
<div class="c m y2" style="left:426px;top:96px;height:17px"></div>
<div class="c m y2" style="left:496px;top:96px;height:17px"></div>
<div class="c m y2" style="left:566px;top:96px;height:17px"></div>
<div class="c m y2" style="left:636px;top:96px;height:17px"></div>
<div class="c m y2" style="left:706px;top:96px;height:17px"></div>
<div class="c m y2" style="left:776px;top:96px;height:17px"></div>
<div class="c m y2" style="left:846px;top:96px;height:17px"></div>
<div class="c m y2" style="left:916px;top:96px;height:17px"></div>
<div class="c rh" style="left:0;top:113px">10</div>
<div class="c r w" style="left:76px;top:113px">1979</div>
<div class="c r" style="left:146px;top:113px">3.92903</div>
<div class="c r b" style="left:216px;top:113px">-0.88571</div>
<div class="c r" style="left:286px;top:113px">7.1</div>
<div class="c r" style="left:356px;top:113px">12.1</div>
<div class="c r" style="left:426px;top:113px">19.1</div>
<div class="c r" style="left:496px;top:113px">24.1</div>
<div class="c r p" style="left:566px;top:113px">28.2871</div>
<div class="c r" style="left:636px;top:113px">25.92258</div>
<div class="c r" style="left:706px;top:113px">22.67333</div>
<div class="c r" style="left:776px;top:113px">15.53226</div>
<div class="c r" style="left:846px;top:113px">13.27667</div>
<div class="c r" style="left:916px;top:113px">6.77097</div>
<div class="c rh" style="left:0;top:131px">11</div>
<div class="c r w" style="left:76px;top:131px">1980</div>
<div class="c r" style="left:146px;top:131px">2.01935</div>
<div class="c r b" style="left:216px;top:131px">1.64138</div>
<div class="c r" style="left:286px;top:131px">8.2</div>
<div class="c r" style="left:356px;top:131px">13.2</div>
<div class="c r" style="left:426px;top:131px">18.2</div>
<div class="c r" style="left:496px;top:131px">25.2</div>
<div class="c r p" style="left:566px;top:131px">29.26452</div>
<div class="c r" style="left:636px;top:131px">27.73226</div>
<div class="c r" style="left:706px;top:131px">24.33</div>
<div class="c r" style="left:776px;top:131px">15.34194</div>
<div class="c r" style="left:846px;top:131px">9.38667</div>
<div class="c r" style="left:916px;top:131px">3.15484</div>
<div class="c rh" style="left:0;top:149px">12</div>
<div class="c r w" style="left:76px;top:149px">1981</div>
<div class="c r b" style="left:146px;top:149px">-1.9129</div>
<div class="c r" style="left:216px;top:149px">6.72857</div>
<div class="c r" style="left:286px;top:149px">9.3</div>
<div class="c r" style="left:356px;top:149px">11.3</div>
<div class="c r" style="left:426px;top:149px">19.3</div>
<div class="c r" style="left:496px;top:149px">24.3</div>
<div class="c r p" style="left:566px;top:149px">28.14194</div>
<div class="c r" style="left:636px;top:149px">26.82258</div>
<div class="c r" style="left:706px;top:149px">21.92667</div>
<div class="c r" style="left:776px;top:149px">14.62903</div>
<div class="c r" style="left:846px;top:149px">10.03667</div>
<div class="c r" style="left:916px;top:149px">3.26129</div>
<div class="c rh" style="left:0;top:167px">13</div>
<div class="c r w" style="left:76px;top:167px">1982</div>
<div class="c r b" style="left:146px;top:167px">-0.82258</div>
<div class="c r" style="left:216px;top:167px">2.95714</div>
<div class="c r" style="left:286px;top:167px">6.4</div>
<div class="c r" style="left:356px;top:167px">12.4</div>
<div class="c r" style="left:426px;top:167px">18.4</div>
<div class="c r" style="left:496px;top:167px">25.4</div>
<div class="c r p" style="left:566px;top:167px">28.53548</div>
<div class="c r" style="left:636px;top:167px">25.5</div>
<div class="c r" style="left:706px;top:167px">21.76333</div>
<div class="c r" style="left:776px;top:167px">16.82258</div>
<div class="c r" style="left:846px;top:167px">12.85333</div>
<div class="c r" style="left:916px;top:167px">8.02258</div>
<div class="c rh" style="left:0;top:185px">14</div>
<div class="c r w" style="left:76px;top:185px">1983</div>
<div class="c r b" style="left:146px;top:185px">3.11935</div>
<div class="c r" style="left:216px;top:185px">4.35714</div>
<div class="c r" style="left:286px;top:185px">7.5</div>
<div class="c r" style="left:356px;top:185px">13.5</div>
<div class="c r" style="left:426px;top:185px">19.5</div>
<div class="c r" style="left:496px;top:185px">24.5</div>
<div class="c r p" style="left:566px;top:185px">30.66452</div>
<div class="c r" style="left:636px;top:185px">27.6</div>
<div class="c r" style="left:706px;top:185px">26.35667</div>
<div class="c r" style="left:776px;top:185px">16.93226</div>
<div class="c r" style="left:846px;top:185px">11.79333</div>
<div class="c r" style="left:916px;top:185px">4.23548</div>
<div class="c rh" style="left:0;top:203px">15</div>
<div class="c r w" style="left:76px;top:203px">1984</div>
<div class="c r b" style="left:146px;top:203px">0.21613</div>
<div class="c r" style="left:216px;top:203px">6.73103</div>
<div class="c r" style="left:286px;top:203px">8.6</div>
<div class="c r" style="left:356px;top:203px">12.6</div>
<div class="c r" style="left:426px;top:203px">18.6</div>
<div class="c r" style="left:496px;top:203px">25.6</div>
<div class="c r p" style="left:566px;top:203px">28.9</div>
<div class="c r" style="left:636px;top:203px">26.1</div>
<div class="c r" style="left:706px;top:203px">22.1</div>
<div class="c r" style="left:776px;top:203px">15.66129</div>
<div class="c r" style="left:846px;top:203px">11.17</div>
<div class="c r" style="left:916px;top:203px">8.39677</div>
<div class="c rh" style="left:0;top:221px">16</div>
<div class="c r w" style="left:76px;top:221px">1985</div>
<div class="c r b" style="left:146px;top:221px">-0.44516</div>
<div class="c r" style="left:216px;top:221px">4.47143</div>
<div class="c r" style="left:286px;top:221px">9.7</div>
<div class="c r" style="left:356px;top:221px">11.7</div>
<div class="c r" style="left:426px;top:221px">19.7</div>
<div class="c r" style="left:496px;top:221px">24.7</div>
<div class="c r p" style="left:566px;top:221px">29.1</div>
<div class="c r" style="left:636px;top:221px">27.2</div>
<div class="c r" style="left:706px;top:221px">23.2</div>
<div class="c r" style="left:776px;top:221px">17.34516</div>
<div class="c r" style="left:846px;top:221px">10.97667</div>
<div class="c r" style="left:916px;top:221px">3.36129</div>
<div class="c rh" style="left:0;top:239px">17</div>
<div class="c r w" style="left:76px;top:239px">1986</div>
<div class="c r" style="left:146px;top:239px">4.21613</div>
<div class="c r b" style="left:216px;top:239px">1.54286</div>
<div class="c r" style="left:286px;top:239px">10.05161</div>
<div class="c r" style="left:356px;top:239px">12.55333</div>
<div class="c r" style="left:426px;top:239px">19.35806</div>
<div class="c r" style="left:496px;top:239px">24.06667</div>
<div class="c r p" style="left:566px;top:239px">28.4</div>
<div class="c r" style="left:636px;top:239px">26.3</div>
<div class="c r" style="left:706px;top:239px">22.3</div>
<div class="c r" style="left:776px;top:239px">16.6129</div>
<div class="c r" style="left:846px;top:239px">10.34</div>
<div class="c r" style="left:916px;top:239px">5.41613</div>
<div class="c rh" style="left:0;top:257px">18</div>
<div class="c r w" style="left:76px;top:257px">1987</div>
<div class="c r b" style="left:146px;top:257px">2.02903</div>
<div class="c r" style="left:216px;top:257px">2.88929</div>
<div class="c r" style="left:286px;top:257px">7.35484</div>
<div class="c r" style="left:356px;top:257px">10.44</div>
<div class="c r" style="left:426px;top:257px">18.92581</div>
<div class="c r" style="left:496px;top:257px">22.95667</div>
<div class="c r p" style="left:566px;top:257px">28.6</div>
<div class="c r" style="left:636px;top:257px">27.4</div>
<div class="c r" style="left:706px;top:257px">23.4</div>
<div class="c r" style="left:776px;top:257px">16.89677</div>
<div class="c r" style="left:846px;top:257px">10.88667</div>
<div class="c r" style="left:916px;top:257px">5.77097</div>
<div class="c rh" style="left:0;top:275px">19</div>
<div class="c r w" style="left:76px;top:275px">1988</div>
<div class="c r b" style="left:146px;top:275px">1.7</div>
<div class="c r" style="left:216px;top:275px">4.2069</div>
<div class="c r" style="left:286px;top:275px">8.60968</div>
<div class="c r" style="left:356px;top:275px">11.61667</div>
<div class="c r" style="left:426px;top:275px">18.49355</div>
<div class="c r" style="left:496px;top:275px">25.43667</div>
<div class="c r" style="left:566px;top:275px">27.1</div>
<div class="c r" style="left:636px;top:275px">26.5</div>
<div class="c r" style="left:706px;top:275px">22.5</div>
<div class="c r" style="left:776px;top:275px">14.62903</div>
<div class="c r" style="left:846px;top:275px">12.54333</div>
<div class="c r" style="left:916px;top:275px">4.69677</div>
<div class="c rh" style="left:0;top:293px">20</div>
<div class="c r w" style="left:76px;top:293px">1989</div>
<div class="c r" style="left:146px;top:293px">5.90645</div>
<div class="c r" style="left:216px;top:293px">3.16786</div>
<div class="c r" style="left:286px;top:293px">7.31935</div>
<div class="c r" style="left:356px;top:293px">12.02667</div>
<div class="c r" style="left:426px;top:293px">19.67419</div>
<div class="c r" style="left:496px;top:293px">24.07667</div>
<div class="c r p" style="left:566px;top:293px">29.3</div>
<div class="c r" style="left:636px;top:293px">27.6</div>
<div class="c r" style="left:706px;top:293px">23.6</div>
<div class="c r" style="left:776px;top:293px">17.6129</div>
<div class="c r" style="left:846px;top:293px">9.87667</div>
<div class="c r b" style="left:916px;top:293px">-1.52581</div>
<div class="c rh" style="left:0;top:311px">21</div>
<div class="c r w" style="left:76px;top:311px">1990</div>
<div class="c r" style="left:146px;top:311px">6.25484</div>
<div class="c r b" style="left:216px;top:311px">6.22857</div>
<div class="c r" style="left:286px;top:311px">9.35484</div>
<div class="c r" style="left:356px;top:311px">12.85</div>
<div class="c r" style="left:426px;top:311px">16.79355</div>
<div class="c r" style="left:496px;top:311px">23.79333</div>
<div class="c r p" style="left:566px;top:311px">28.8</div>
<div class="c r" style="left:636px;top:311px">26.7</div>
<div class="c r" style="left:706px;top:311px">22.7</div>
<div class="c r" style="left:776px;top:311px">19.26452</div>
<div class="c r" style="left:846px;top:311px">13.84667</div>
<div class="c r" style="left:916px;top:311px">9.34194</div>
<div class="c rh" style="left:0;top:329px">22</div>
<div class="c r w" style="left:76px;top:329px">1991</div>
<div class="c r b" style="left:146px;top:329px">2.57419</div>
<div class="c r" style="left:216px;top:329px">6.81429</div>
<div class="c r" style="left:286px;top:329px">9.3129</div>
<div class="c r" style="left:356px;top:329px">15.78333</div>
<div class="c r" style="left:426px;top:329px">22.93871</div>
<div class="c r" style="left:496px;top:329px">26.21667</div>
<div class="c r p" style="left:566px;top:329px">29.5</div>
<div class="c r" style="left:636px;top:329px">27.8</div>
<div class="c r" style="left:706px;top:329px">23.8</div>
<div class="c r" style="left:776px;top:329px">16.1</div>
<div class="c r" style="left:846px;top:329px">10.1</div>
<div class="c r" style="left:916px;top:329px">6.30968</div>
<div class="c rh" style="left:0;top:347px">23</div>
<div class="c r w" style="left:76px;top:347px">1992</div>
<div class="c r b" style="left:146px;top:347px">3.41613</div>
<div class="c r" style="left:216px;top:347px">4.42759</div>
<div class="c r" style="left:286px;top:347px">5.89677</div>
<div class="c r" style="left:356px;top:347px">12.25667</div>
<div class="c r" style="left:426px;top:347px">17.46774</div>
<div class="c r" style="left:496px;top:347px">24.82667</div>
<div class="c r" style="left:566px;top:347px">27.4</div>
<div class="c r" style="left:636px;top:347px">26.9</div>
<div class="c r" style="left:706px;top:347px">22.9</div>
<div class="c r" style="left:776px;top:347px">15.2</div>
<div class="c r" style="left:846px;top:347px">11.2</div>
<div class="c r" style="left:916px;top:347px">5.17742</div>
<div class="c rh" style="left:0;top:365px">24</div>
<div class="c r w" style="left:76px;top:365px">1993</div>
<div class="c r" style="left:146px;top:365px">4.12581</div>
<div class="c r b" style="left:216px;top:365px">1.75</div>
<div class="c r" style="left:286px;top:365px">6.23871</div>
<div class="c r" style="left:356px;top:365px">12.92</div>
<div class="c r" style="left:426px;top:365px">20.34516</div>
<div class="c r" style="left:496px;top:365px">26.55333</div>
<div class="c r p" style="left:566px;top:365px">28.7</div>
<div class="c r" style="left:636px;top:365px">27.1</div>
<div class="c r" style="left:706px;top:365px">23.1</div>
<div class="c r" style="left:776px;top:365px">16.3</div>
<div class="c r" style="left:846px;top:365px">10.3</div>
<div class="c r" style="left:916px;top:365px">4.87419</div>
<div class="c rh" style="left:0;top:383px">25</div>
<div class="c r w" style="left:76px;top:383px">1994</div>
<div class="c r b" style="left:146px;top:383px">-0.55161</div>
<div class="c r" style="left:216px;top:383px">1.19286</div>
<div class="c r" style="left:286px;top:383px">7.16774</div>
<div class="c r" style="left:356px;top:383px">15.83667</div>
<div class="c r" style="left:426px;top:383px">19.66774</div>
<div class="c r" style="left:496px;top:383px">27.69333</div>
<div class="c r p" style="left:566px;top:383px">29.2</div>
<div class="c r" style="left:636px;top:383px">26.2</div>
<div class="c r" style="left:706px;top:383px">22.2</div>
<div class="c r" style="left:776px;top:383px">15.4</div>
<div class="c r" style="left:846px;top:383px">11.4</div>
<div class="c r" style="left:916px;top:383px">7.56129</div>
<div class="c rh" style="left:0;top:401px">26</div>
<div class="c r w" style="left:76px;top:401px">1995</div>
<div class="c r" style="left:146px;top:401px">5</div>
<div class="c r b" style="left:216px;top:401px">2.27857</div>
<div class="c r" style="left:286px;top:401px">7.3</div>
<div class="c r" style="left:356px;top:401px">12.08</div>
<div class="c r" style="left:426px;top:401px">18.49677</div>
<div class="c r" style="left:496px;top:401px">25.01333</div>
<div class="c r p" style="left:566px;top:401px">29.25161</div>
<div class="c r" style="left:636px;top:401px">27.49355</div>
<div class="c r" style="left:706px;top:401px">21.73333</div>
<div class="c r" style="left:776px;top:401px">19.0871</div>
<div class="c r" style="left:846px;top:401px">9.12333</div>
<div class="c r" style="left:916px;top:401px">3.17097</div>
<div class="c rh" style="left:0;top:419px">27</div>
<div class="c r w" style="left:76px;top:419px">1996</div>
<div class="c r" style="left:146px;top:419px">3.08065</div>
<div class="c r b" style="left:216px;top:419px">3.05172</div>
<div class="c r" style="left:286px;top:419px">6.72581</div>
<div class="c r" style="left:356px;top:419px">13.07</div>
<div class="c r" style="left:426px;top:419px">18.77097</div>
<div class="c r" style="left:496px;top:419px">24.37</div>
<div class="c r p" style="left:566px;top:419px">26.30968</div>
<div class="c r" style="left:636px;top:419px">25.42258</div>
<div class="c r" style="left:706px;top:419px">21.20667</div>
<div class="c r" style="left:776px;top:419px">15.90968</div>
<div class="c r" style="left:846px;top:419px">8.18667</div>
<div class="c r" style="left:916px;top:419px">7.47097</div>
<div class="c rh" style="left:0;top:437px">28</div>
<div class="c r w" style="left:76px;top:437px">1997</div>
<div class="c r b" style="left:146px;top:437px">2.63548</div>
<div class="c r" style="left:216px;top:437px">6.13929</div>
<div class="c r" style="left:286px;top:437px">6.5</div>
<div class="c r" style="left:356px;top:437px">12.05667</div>
<div class="c r" style="left:426px;top:437px">17.90323</div>
<div class="c r" style="left:496px;top:437px">24.82333</div>
<div class="c r p" style="left:566px;top:437px">28.03226</div>
<div class="c r" style="left:636px;top:437px">25.98387</div>
<div class="c r" style="left:706px;top:437px">22.15333</div>
<div class="c r" style="left:776px;top:437px">15.80645</div>
<div class="c r" style="left:846px;top:437px">8.53667</div>
<div class="c r" style="left:916px;top:437px">5.41613</div>
<div class="c rh" style="left:0;top:455px">29</div>
<div class="c r w" style="left:76px;top:455px">1998</div>
<div class="c r b" style="left:146px;top:455px">4.2871</div>
<div class="c r" style="left:216px;top:455px">4.96786</div>
<div class="c r" style="left:286px;top:455px">9.30323</div>
<div class="c r" style="left:356px;top:455px">13.74333</div>
<div class="c r" style="left:426px;top:455px">20.41613</div>
<div class="c r" style="left:496px;top:455px">22.21667</div>
<div class="c r p" style="left:566px;top:455px">28.11935</div>
<div class="c r" style="left:636px;top:455px">26.77742</div>
<div class="c r" style="left:706px;top:455px">23.57667</div>
<div class="c r" style="left:776px;top:455px">16.43871</div>
<div class="c r" style="left:846px;top:455px">10.42333</div>
<div class="c r" style="left:916px;top:455px">7.93548</div>
<div class="c rh" style="left:0;top:473px">30</div>
<div class="c r w" style="left:76px;top:473px">1999</div>
<div class="c r b" style="left:146px;top:473px">3.02903</div>
<div class="c r" style="left:216px;top:473px">4.075</div>
<div class="c r" style="left:286px;top:473px">9.40452</div>
<div class="c r" style="left:356px;top:473px">14.03667</div>
<div class="c r" style="left:426px;top:473px">19.33677</div>
<div class="c r" style="left:496px;top:473px">26.93</div>
<div class="c r p" style="left:566px;top:473px">29.09032</div>
<div class="c r" style="left:636px;top:473px">26.87742</div>
<div class="c r" style="left:706px;top:473px">21.10667</div>
<div class="c r" style="left:776px;top:473px">16.34516</div>
<div class="c r" style="left:846px;top:473px">10.66667</div>
<div class="c r" style="left:916px;top:473px">9.00654</div>
<div class="a" style="left:145px;top:23px;width:842px;height:460px;border:2px solid #1f8ae8;border-right-width:2px"></div>
<div class="a" style="left:983px;top:21px;width:5px;height:5px;background:#1f8ae8"></div>
</div>
<div class="a" style="left:33px;top:318px;width:728px;height:17px;background:#c8c8c8;border-top:1px solid #000;border-right:1px solid #000"></div>
<div class="tb" style="left:33px;top:318px"></div>
<div class="tb" style="left:50px;top:318px"></div>
<div class="tb" style="left:67px;top:318px"></div>
<div class="tb" style="left:84px;top:318px"></div>
<svg class="a" style="left:33px;top:318px" width="68" height="17" viewBox="0 0 68 17"><path d="M10.5 4.5V12.5L5.5 8.5Z" fill="#7a7a7a"/><path d="M24.5 4.5V12.5L29.5 8.5Z" fill="#7a7a7a"/><path d="M39 8.5H46M42.5 5V12" stroke="#111" stroke-width="1.1" fill="none"/><path d="M56 5L59.5 12.5L63 5" stroke="#444" stroke-width="1.1" fill="none"/></svg>
<svg class="a" style="left:102px;top:318px" width="72" height="17" viewBox="0 0 72 17"><path d="M0 0L7.5 17H63.5L69.5 0Z" fill="#fff"/><path d="M.5 0L7.5 17M69 0L63.5 17" stroke="#000" stroke-width="1.2" fill="none"/></svg>
<div class="a" style="left:113px;top:319px;font-size:12px;font-weight:bold;line-height:16px;letter-spacing:-.05px;color:#000">wtspivot</div>
<div class="a" style="left:761px;top:318px;width:5px;height:17px;background:#f6f6f6;border-right:1px solid #000"></div>
<div class="sb" style="left:766px;top:318px;width:284px;height:17px"></div>
<div class="th" style="left:782px;top:319px;width:250px;height:15px"></div>
<svg class="a" style="left:774.5px;top:326.5px;overflow:visible" width="1" height="1"><path d="M2 -3.5L-1.5 0L2 3.5" fill="none" stroke="#5a5a5a" stroke-width="1.7"/></svg>
<svg class="a" style="left:1042px;top:326.5px;overflow:visible" width="1" height="1"><path d="M-2 -3.5L1.5 0L-2 3.5" fill="none" stroke="#5a5a5a" stroke-width="1.7"/></svg>
<div class="a" style="left:1050px;top:318px;width:23px;height:17px;background:#f6f6f6"></div>
<div class="a" style="left:1056px;top:312px;width:17px;height:6px;background:#f6f6f6;border-top:1px solid #000"></div>
<div class="a" style="left:1050px;top:318px;width:1px;height:17px;background:#000"></div>
<div class="a" style="left:1055px;top:317px;width:18px;height:18px;background:#f0f0f0;border-top:1px solid #000;border-left:1px solid #000"></div>
<svg class="a" style="left:1062px;top:325px" width="9" height="9" viewBox="0 0 9 9" shape-rendering="crispEdges"><g fill="#bdbdbd"><rect x="6" y="0" width="2" height="2"/><rect x="3" y="3" width="2" height="2"/><rect x="6" y="3" width="2" height="2"/><rect x="0" y="6" width="2" height="2"/><rect x="3" y="6" width="2" height="2"/><rect x="6" y="6" width="2" height="2"/></g></svg>
<div class="sb" style="left:1056px;top:38px;width:17px;height:274px"></div>
<div class="th" style="left:1057px;top:62px;width:15px;height:68px"></div>
<svg class="a" style="left:1064.5px;top:47px;overflow:visible" width="1" height="1"><path d="M-3.5 2L0 -1.5L3.5 2" fill="none" stroke="#5a5a5a" stroke-width="1.7"/></svg>
<svg class="a" style="left:1064.5px;top:303.5px;overflow:visible" width="1" height="1"><path d="M-3.5 -2L0 1.5L3.5 -2" fill="none" stroke="#5a5a5a" stroke-width="1.7"/></svg>
<div class="a" style="left:29px;top:853px;width:728px;height:17px;background:#c8c8c8;border-top:1px solid #000;border-right:1px solid #000"></div>
<div class="tb" style="left:29px;top:853px"></div>
<div class="tb" style="left:46px;top:853px"></div>
<div class="tb" style="left:63px;top:853px"></div>
<div class="tb" style="left:80px;top:853px"></div>
<svg class="a" style="left:29px;top:853px" width="68" height="17" viewBox="0 0 68 17"><path d="M10.5 4.5V12.5L5.5 8.5Z" fill="#7a7a7a"/><path d="M24.5 4.5V12.5L29.5 8.5Z" fill="#7a7a7a"/><path d="M39 8.5H46M42.5 5V12" stroke="#111" stroke-width="1.1" fill="none"/><path d="M56 5L59.5 12.5L63 5" stroke="#444" stroke-width="1.1" fill="none"/></svg>
<svg class="a" style="left:98px;top:853px" width="72" height="17" viewBox="0 0 72 17"><path d="M0 0L7.5 17H63.5L69.5 0Z" fill="#fff"/><path d="M.5 0L7.5 17M69 0L63.5 17" stroke="#000" stroke-width="1.2" fill="none"/></svg>
<div class="a" style="left:109px;top:854px;font-size:12px;font-weight:bold;line-height:16px;letter-spacing:-.05px;color:#000">wtspivot</div>
<div class="a" style="left:757px;top:853px;width:5px;height:17px;background:#f6f6f6;border-right:1px solid #000"></div>
<div class="sb" style="left:762px;top:853px;width:284px;height:17px"></div>
<div class="th" style="left:778px;top:854px;width:250px;height:15px"></div>
<svg class="a" style="left:770.5px;top:861.5px;overflow:visible" width="1" height="1"><path d="M2 -3.5L-1.5 0L2 3.5" fill="none" stroke="#5a5a5a" stroke-width="1.7"/></svg>
<svg class="a" style="left:1038px;top:861.5px;overflow:visible" width="1" height="1"><path d="M-2 -3.5L1.5 0L-2 3.5" fill="none" stroke="#5a5a5a" stroke-width="1.7"/></svg>
<div class="a" style="left:1046px;top:853px;width:23px;height:17px;background:#f6f6f6"></div>
<div class="a" style="left:1052px;top:847px;width:17px;height:6px;background:#f6f6f6;border-top:1px solid #000"></div>
<div class="a" style="left:1046px;top:853px;width:1px;height:17px;background:#000"></div>
<div class="a" style="left:1051px;top:852px;width:18px;height:18px;background:#f0f0f0;border-top:1px solid #000;border-left:1px solid #000"></div>
<svg class="a" style="left:1058px;top:860px" width="9" height="9" viewBox="0 0 9 9" shape-rendering="crispEdges"><g fill="#bdbdbd"><rect x="6" y="0" width="2" height="2"/><rect x="3" y="3" width="2" height="2"/><rect x="6" y="3" width="2" height="2"/><rect x="0" y="6" width="2" height="2"/><rect x="3" y="6" width="2" height="2"/><rect x="6" y="6" width="2" height="2"/></g></svg>
<div class="sb" style="left:1052px;top:376px;width:17px;height:471px"></div>
<div class="th" style="left:1053px;top:466px;width:15px;height:177px"></div>
<svg class="a" style="left:1060.5px;top:385px;overflow:visible" width="1" height="1"><path d="M-3.5 2L0 -1.5L3.5 2" fill="none" stroke="#5a5a5a" stroke-width="1.7"/></svg>
<svg class="a" style="left:1060.5px;top:838.5px;overflow:visible" width="1" height="1"><path d="M-3.5 -2L0 1.5L3.5 -2" fill="none" stroke="#5a5a5a" stroke-width="1.7"/></svg>
<div class="a" style="left:0;top:865px;width:19px;height:18px;background:#c9daf0"></div>
<div class="a" style="left:19px;top:880px;width:73px;height:3px;background:#c9daf0"></div>
<div class="a" style="left:18px;top:876px;width:1px;height:7px;background:#222"></div>
<div class="a" style="left:2px;top:880px;width:7px;height:3px;background:repeating-linear-gradient(90deg,#b070a8 0 1px,transparent 1px 3px)"></div>
<div class="a" style="left:26px;top:880px;width:2px;height:3px;background:#111"></div>
<div class="a" style="left:46px;top:880px;width:7px;height:3px;border:1px solid #111;border-bottom:0"></div>
<svg class="a" style="left:73px;top:879px" width="10" height="4" viewBox="0 0 10 4"><path d="M.5 4.5L5 .8L9.5 4.5" fill="none" stroke="#111" stroke-width="1.2"/></svg>
<div class="menu" style="left:301px;top:19px;width:304px;height:604px"></div>
<div class="hl" style="left:304px;top:569px;width:298px;height:22px"></div>
<div id="m0" class="mi" style="left:332px;top:22px;letter-spacing:-0.057px">Plot</div>
<div id="m1" class="mi dis" style="left:332px;top:52px;letter-spacing:-0.102px">Cut</div>
<div id="m2" class="mi" style="left:332px;top:74px;letter-spacing:-0.265px">Copy</div>
<div id="m3" class="mi" style="left:332px;top:96px;letter-spacing:-0.089px">Copy Columns to...</div>
<div id="m4" class="mi dis" style="left:332px;top:118px;letter-spacing:-0.604px">Paste</div>
<div id="m5" class="mi dis" style="left:332px;top:148px;letter-spacing:-0.011px">Insert</div>
<div id="m6" class="mi" style="left:332px;top:170px;letter-spacing:-0.142px">Delete</div>
<div id="m7" class="mi dis" style="left:332px;top:192px;letter-spacing:-0.108px">Clear Contents</div>
<div id="m8" class="mi" style="left:332px;top:214px;letter-spacing:-0.351px">Remo<u>v</u>e Links...</div>
<div id="m9" class="mi" style="left:332px;top:244px;letter-spacing:-0.525px">Set As</div>
<div id="m10" class="mi" style="left:332px;top:266px;letter-spacing:-0.178px">Set As Categorical</div>
<div id="m11" class="mi" style="left:332px;top:296px;letter-spacing:-0.042px">Set Multiple Columns Values...</div>
<div id="m12" class="mi" style="left:332px;top:318px;letter-spacing:0.049px">Fill Columns With</div>
<div id="m13" class="mi" style="left:332px;top:348px;letter-spacing:-0.131px">Sort Columns</div>
<div id="m14" class="mi" style="left:332px;top:370px;letter-spacing:0.011px">Sort Worksheet</div>
<div id="m15" class="mi" style="left:332px;top:392px;letter-spacing:-0.147px">Sort Columns by <u>L</u>abel...</div>
<div id="m16" class="mi" style="left:332px;top:422px;letter-spacing:-0.172px">Normalize...</div>
<div id="m17" class="mi" style="left:332px;top:444px;letter-spacing:-0.102px">Statistics on Rows...</div>
<div id="m18" class="mi" style="left:332px;top:466px;letter-spacing:-0.073px">Statistics on Columns...</div>
<div id="m19" class="mi" style="left:332px;top:496px;letter-spacing:0.075px"><u>H</u>ide/Unhide Columns</div>
<div id="m20" class="mi" style="left:332px;top:518px;letter-spacing:-0.127px"><u>M</u>ove Columns</div>
<div id="m21" class="mi" style="left:332px;top:548px;letter-spacing:-0.232px"><u>F</u>ormat Cells...</div>
<div id="m22" class="mi" style="left:332px;top:570px;letter-spacing:0.200px">Conditional <u>F</u>ormatting</div>
<div id="m23" class="mi" style="left:332px;top:600px;letter-spacing:-0.138px">Properties...</div>
<div id="m24" class="mi dis" style="right:534.58px;top:52px;letter-spacing:-0.080px">Ctrl+X</div>
<div id="m25" class="mi dis" style="right:534.48px;top:118px;letter-spacing:0.020px">Ctrl+V</div>
<div id="m26" class="mi dis" style="right:534.642px;top:192px;letter-spacing:-0.142px">Delete</div>
<div id="m27" class="mi" style="right:534.282px;top:296px;letter-spacing:0.218px">Ctrl+Shift+Q</div>
<div class="sep" style="left:336px;top:47px;width:268px"></div>
<div class="sep" style="left:336px;top:143px;width:268px"></div>
<div class="sep" style="left:336px;top:239px;width:268px"></div>
<div class="sep" style="left:336px;top:291px;width:268px"></div>
<div class="sep" style="left:336px;top:343px;width:268px"></div>
<div class="sep" style="left:336px;top:417px;width:268px"></div>
<div class="sep" style="left:336px;top:491px;width:268px"></div>
<div class="sep" style="left:336px;top:543px;width:268px"></div>
<div class="sep" style="left:336px;top:595px;width:268px"></div>
<div class="arr" style="left:596px;top:28px"></div>
<div class="arr" style="left:596px;top:80px"></div>
<div class="arr" style="left:596px;top:250px"></div>
<div class="arr" style="left:596px;top:324px"></div>
<div class="arr" style="left:596px;top:354px"></div>
<div class="arr" style="left:596px;top:376px"></div>
<div class="arr" style="left:596px;top:502px"></div>
<div class="arr" style="left:596px;top:524px"></div>
<div class="arr" style="left:596px;top:576px"></div>
<svg class="a" style="left:309px;top:55px" width="11" height="14" viewBox="0 0 11 14"><g fill="none" stroke="#979db2"><path d="M2.2 .3L6.6 8.6" stroke-width="2.1"/><path d="M8.8 .3L4.4 8.6" stroke-width="2.1"/><circle cx="2.7" cy="11" r="1.9" stroke-width="1.5"/><circle cx="8.3" cy="11" r="1.9" stroke-width="1.5"/></g></svg>
<svg class="a" style="left:306px;top:120px" width="17" height="15" viewBox="0 0 17 15"><rect x=".5" y="2" width="11" height="10.5" rx="1.5" fill="#a9afc2" stroke="#8e94aa"/><rect x="3.5" y=".5" width="5" height="3" rx="1" fill="#c9cdd9" stroke="#8e94aa" stroke-width=".8"/><rect x="6.5" y="6.5" width="9.5" height="7.5" fill="#e4e6ee" stroke="#8e94aa"/><path d="M8.5 9H14M8.5 11.5H12" stroke="#a9afc2" stroke-width="1"/></svg>
<div class="a" style="left:309px;top:444px;width:9px;text-align:center;font-size:15px;line-height:16px;font-weight:bold;color:#000;font-family:'Liberation Serif',serif;transform:scaleX(.82)">&Sigma;</div>
<svg class="a" style="left:306px;top:458px" width="16" height="4" viewBox="0 0 16 4" shape-rendering="crispEdges"><rect width="16" height="4" fill="#000"/><rect x="1" y="1" width="2" height="2" fill="#fff"/><rect x="4" y="1" width="2" height="2" fill="#fff"/><rect x="7" y="1" width="2" height="2" fill="#fff"/><rect x="10" y="1" width="2" height="2" fill="#fff"/><rect x="13" y="1" width="2" height="2" fill="#fff"/></svg>
<div class="a" style="left:306px;top:468px;width:9px;text-align:center;font-size:15px;line-height:16px;font-weight:bold;color:#000;font-family:'Liberation Serif',serif;transform:scaleX(.82)">&Sigma;</div>
<svg class="a" style="left:316px;top:469px" width="6" height="14" viewBox="0 0 6 14" shape-rendering="crispEdges"><rect width="6" height="14" fill="#000"/><rect x="1" y="1" width="4" height="2" fill="#fff"/><rect x="1" y="4" width="4" height="1" fill="#fff"/><rect x="1" y="6" width="4" height="1" fill="#fff"/><rect x="1" y="8" width="4" height="1" fill="#fff"/><rect x="1" y="10" width="4" height="1" fill="#fff"/><rect x="1" y="12" width="4" height="1" fill="#fff"/></svg>
<div class="menu" style="left:604px;top:567px;width:222px;height:218px"></div>
<div class="hl" style="left:607px;top:709px;width:217px;height:22px"></div>
<div id="m28" class="mi" style="left:635px;top:570px;letter-spacing:0.246px"><u>H</u>ighlight...</div>
<div id="m29" class="mi" style="left:635px;top:592px;letter-spacing:0.055px">Top/<u>B</u>ottom...</div>
<div id="m30" class="mi" style="left:635px;top:614px;letter-spacing:-0.170px">Heatma<u>p</u></div>
<div id="m31" class="mi" style="left:635px;top:636px;letter-spacing:-0.040px"><u>D</u>uplicates</div>
<div id="m32" class="mi" style="left:635px;top:658px;letter-spacing:-0.251px">Pare<u>t</u>o</div>
<div id="m33" class="mi" style="left:635px;top:680px;letter-spacing:-0.002px"><u>O</u>utliers...</div>
<div id="m34" class="mi" style="left:635px;top:710px;letter-spacing:0.276px">Highlight Min Ma<u>x</u></div>
<div id="m35" class="mi" style="left:635px;top:740px;letter-spacing:-0.296px"><u>R</u>emove Format</div>
<div id="m36" class="mi" style="left:635px;top:762px;letter-spacing:0.096px">Conditional Format <u>M</u>anager...</div>
<div class="sep" style="left:639px;top:705px;width:186px"></div>
<div class="sep" style="left:639px;top:735px;width:186px"></div>
<div class="arr" style="left:818px;top:620px"></div>
<div class="arr" style="left:818px;top:642px"></div>
<div class="arr" style="left:818px;top:664px"></div>
<div class="arr" style="left:818px;top:716px"></div>
<div class="pk" style="left:625px;top:611px;width:83px"></div>
<div class="pk" style="left:627px;top:677px;width:57px"></div>
<div class="pk" style="left:625px;top:698px;width:65px"></div>
<div class="pk" style="left:616px;top:731px;width:130px"></div>
<div class="menu" style="left:826px;top:707px;width:139px;height:78px"></div>
<div id="m37" class="mi" style="left:857px;top:710px;letter-spacing:-0.080px">Row-wise</div>
<div id="m38" class="mi" style="left:857px;top:732px;letter-spacing:-0.006px">Column-wise</div>
<div id="m39" class="mi" style="left:857px;top:762px;letter-spacing:0.048px"><u>O</u>pen Dialog...</div>
<div class="sep" style="left:861px;top:757px;width:103px"></div>
</body></html>
